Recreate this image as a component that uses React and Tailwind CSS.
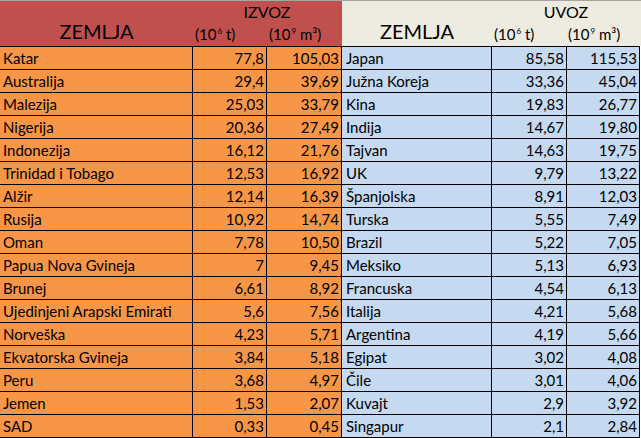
import React from 'react';

const izvoz = [
  ['Katar', '77,8', '105,03'],
  ['Australija', '29,4', '39,69'],
  ['Malezija', '25,03', '33,79'],
  ['Nigerija', '20,36', '27,49'],
  ['Indonezija', '16,12', '21,76'],
  ['Trinidad i Tobago', '12,53', '16,92'],
  ['Alžir', '12,14', '16,39'],
  ['Rusija', '10,92', '14,74'],
  ['Oman', '7,78', '10,50'],
  ['Papua Nova Gvineja', '7', '9,45'],
  ['Brunej', '6,61', '8,92'],
  ['Ujedinjeni Arapski Emirati', '5,6', '7,56'],
  ['Norveška', '4,23', '5,71'],
  ['Ekvatorska Gvineja', '3,84', '5,18'],
  ['Peru', '3,68', '4,97'],
  ['Jemen', '1,53', '2,07'],
  ['SAD', '0,33', '0,45'],
];

const uvoz = [
  ['Japan', '85,58', '115,53'],
  ['Južna Koreja', '33,36', '45,04'],
  ['Kina', '19,83', '26,77'],
  ['Indija', '14,67', '19,80'],
  ['Tajvan', '14,63', '19,75'],
  ['UK', '9,79', '13,22'],
  ['Španjolska', '8,91', '12,03'],
  ['Turska', '5,55', '7,49'],
  ['Brazil', '5,22', '7,05'],
  ['Meksiko', '5,13', '6,93'],
  ['Francuska', '4,54', '6,13'],
  ['Italija', '4,21', '5,68'],
  ['Argentina', '4,19', '5,66'],
  ['Egipat', '3,02', '4,08'],
  ['Čile', '3,01', '4,06'],
  ['Kuvajt', '2,9', '3,92'],
  ['Singapur', '2,1', '2,84'],
];

const HeaderBlock = ({ title, wide, bg }) => (
  <div className={`flex ${bg} ${wide ? 'w-[342px]' : 'flex-1'} h-[45px]`}>
    <div className={`${wide ? 'w-[193px]' : 'w-[150px]'} flex items-end justify-center pb-[5px] text-[20px] leading-none`}>
      ZEMLJA
    </div>
    <div className="flex flex-col">
      <div className="h-[22px] w-[148px] flex items-center justify-center text-[16px]">{title}</div>
      <div className="flex text-[15px] leading-none pt-[4px]">
        <span className="w-[74px] pl-[2px]">(10<sup className="text-[8px] -top-[6px] pl-[1px]">6</sup> t)</span>
        <span className="w-[75px] pl-[2px]">(10<sup className="text-[8px] -top-[6px] pl-[1px]">9</sup> m³)</span>
      </div>
    </div>
  </div>
);

export default function App() {
  return (
    <div className="w-[641px] h-[438px] bg-white text-black overflow-hidden font-['Lato','Liberation_Sans',sans-serif]">
      <div className="h-[1px] bg-[#a6a6a6]" />
      <div className="flex">
        <HeaderBlock title="IZVOZ" wide bg="bg-[#c0504d]" />
        <HeaderBlock title="UVOZ" bg="bg-[#eeece1]" />
      </div>
      <div className="w-[640px] border-t border-black">
        {izvoz.map((l, i) => {
          const r = uvoz[i];
          return (
            <div key={l[0]} className="flex h-[23px] border-b border-black text-[15px]">
              <div className="w-[193px] bg-[#f79646] border-r border-black pl-[3px] flex items-center">{l[0]}</div>
              <div className="w-[74px] bg-[#f79646] border-r border-black pr-[2px] flex items-center justify-end">{l[1]}</div>
              <div className="w-[75px] bg-[#f79646] border-r border-black pr-[2px] flex items-center justify-end">{l[2]}</div>
              <div className="w-[150px] bg-[#c5d9f1] border-r border-black pl-[4px] flex items-center">{r[0]}</div>
              <div className="w-[75px] bg-[#c5d9f1] border-r border-black pr-[2px] flex items-center justify-end">{r[1]}</div>
              <div className="w-[73px] bg-[#c5d9f1] border-r border-black pr-[2px] flex items-center justify-end">{r[2]}</div>
            </div>
          );
        })}
      </div>
    </div>
  );
}
